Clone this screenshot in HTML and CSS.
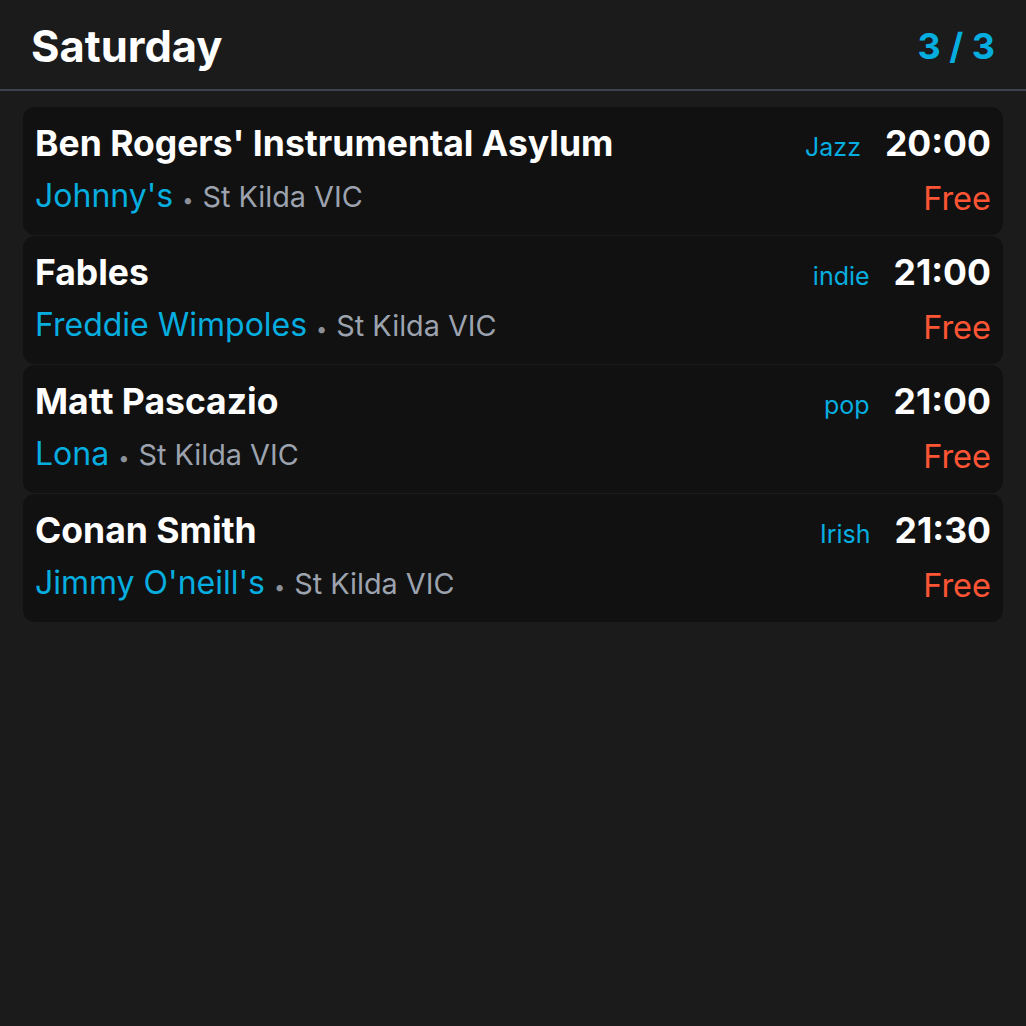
FILE: index.html
```html
<!DOCTYPE html>
<html>
<head>
<meta charset="utf-8">
<link rel="stylesheet" href="styles.css">
</head>
<body>
<div class="app">
  <header class="header">
    <h1 class="day">Saturday</h1>
    <div class="count">3 / 3</div>
  </header>
  <div class="list">
    <div class="card">
      <div class="info">
        <div class="title">Ben Rogers' Instrumental Asylum</div>
        <div class="place"><span class="venue">Johnny's</span><span class="dot">•</span><span class="loc">St Kilda VIC</span></div>
      </div>
      <div class="meta">
        <div class="top"><span class="genre">Jazz</span><span class="time">20:00</span></div>
        <div class="price">Free</div>
      </div>
    </div>
    <div class="card">
      <div class="info">
        <div class="title">Fables</div>
        <div class="place"><span class="venue">Freddie Wimpoles</span><span class="dot">•</span><span class="loc">St Kilda VIC</span></div>
      </div>
      <div class="meta">
        <div class="top"><span class="genre">indie</span><span class="time">21:00</span></div>
        <div class="price">Free</div>
      </div>
    </div>
    <div class="card">
      <div class="info">
        <div class="title">Matt Pascazio</div>
        <div class="place"><span class="venue">Lona</span><span class="dot">•</span><span class="loc">St Kilda VIC</span></div>
      </div>
      <div class="meta">
        <div class="top"><span class="genre">pop</span><span class="time">21:00</span></div>
        <div class="price">Free</div>
      </div>
    </div>
    <div class="card">
      <div class="info">
        <div class="title">Conan Smith</div>
        <div class="place"><span class="venue">Jimmy O'neill's</span><span class="dot">•</span><span class="loc">St Kilda VIC</span></div>
      </div>
      <div class="meta">
        <div class="top"><span class="genre">Irish</span><span class="time">21:30</span></div>
        <div class="price">Free</div>
      </div>
    </div>
  </div>
</div>
</body>
</html>
```

FILE: styles.css
```css
* { box-sizing: border-box; }
html, body { margin: 0; padding: 0; }
body {
  background: #1b1b1b;
  font-family: Inter, "Noto Sans", sans-serif;
  color: #fff;
  width: 1026px;
  height: 1026px;
}
.header {
  display: flex;
  justify-content: space-between;
  align-items: center;
  height: 91px;
  padding: 2px 31px 0 31px;
  border-bottom: 2px solid #3c4350;
}
.day {
  margin: 0;
  font-size: 43.5px;
  font-weight: 700;
}
.count {
  font-size: 36px;
  font-weight: 700;
  color: #06aee0;
}
.list {
  display: flex;
  flex-direction: column;
  gap: 1px;
  padding: 16px 23px;
}
.card {
  display: flex;
  justify-content: space-between;
  background: #111111;
  border-radius: 12px;
  height: 128px;
  padding: 15px 12px 0 12px;
}
.info { display: flex; flex-direction: column; }
.title {
  font-size: 35.5px;
  font-weight: 700;
  line-height: 44px;
}
.place {
  font-size: 32px;
  line-height: 60px;
  display: flex;
  align-items: baseline;
}
.venue { color: #06aee0; }
.dot { color: #8a8f98; font-size: 20px; margin: 0 9px; }
.loc { color: #9ca3af; font-size: 28.8px; }
.meta { display: flex; flex-direction: column; align-items: flex-end; }
.top { display: flex; align-items: baseline; line-height: 44px; }
.genre { color: #06aee0; font-size: 25px; margin-right: 24px; }
.time { font-size: 35.5px; font-weight: 700; }
.price { color: #ff5535; font-size: 32.5px; line-height: 60px; }
```
